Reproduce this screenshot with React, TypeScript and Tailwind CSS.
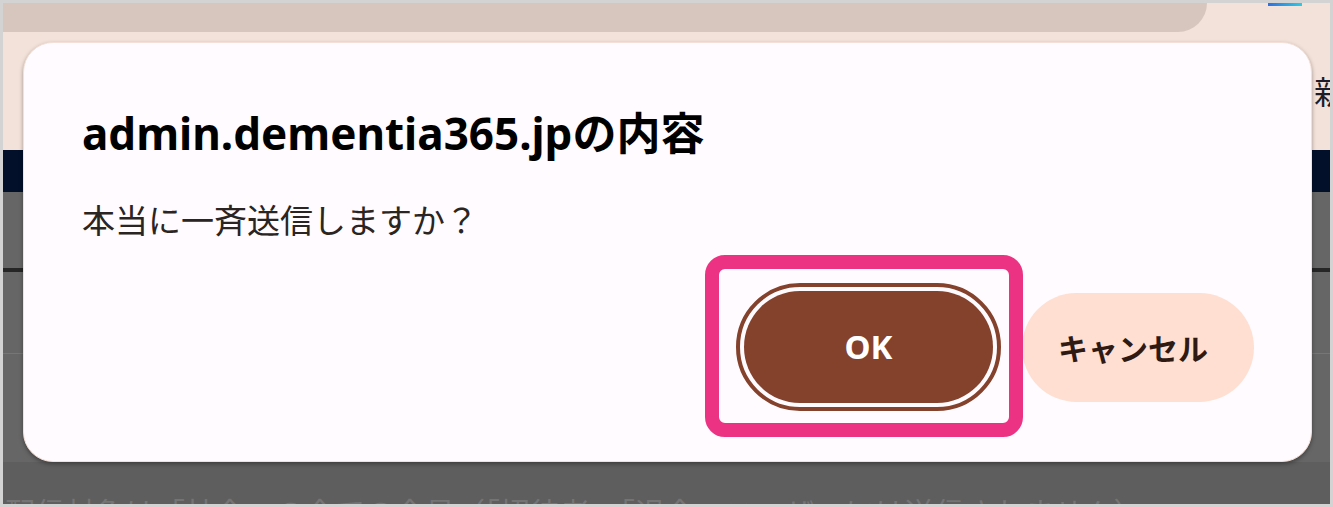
export default function App() {
  return (
    <div className="relative w-[1333px] h-[507px] overflow-hidden border-[3px] border-[#d3d3d3] bg-[#f3e2d9] font-['Noto_Sans','Noto_Sans_CJK_JP',sans-serif]">
      {/* page behind the dialog */}
      <div className="flex flex-col h-full">
        <div className="flex h-[29px] shrink-0">
          <div className="w-[1204px] h-full bg-[#d7c6be] rounded-br-[34px]" />
          <div className="ml-[61px] w-[34px] h-[3px] bg-gradient-to-r from-[#2f6fe0] to-[#2ccbe3]" />
        </div>
        <div className="flex h-[118px] shrink-0 justify-end items-start pt-[40px]">
          <span className="-mr-[16px] text-[32px] leading-[36px] text-[#1d1d2a] font-['Noto_Sans_CJK_JP',sans-serif]">新</span>
        </div>
        <div className="h-[42px] shrink-0 bg-[#02102a]" />
        <div className="flex flex-col flex-1 bg-[#666666]">
          <div className="h-[76px]" />
          <div className="h-[4px] bg-[#262626]" />
          <div className="h-[81px]" />
          <div className="h-px bg-[#767676]" />
          <div className="h-[108px]" />
          <div className="flex-1 bg-[#5e5e5e] pt-[31px] px-[2px] overflow-hidden">
            <p className="whitespace-nowrap text-[30px] leading-[36px] text-[#747474] font-['Noto_Sans_CJK_JP',sans-serif]">
              配信対象は「社会」の全ての会員（「招待者」「退会」ユーザーには送信されません）
            </p>
          </div>
        </div>
      </div>

      {/* confirm dialog */}
      <div className="absolute left-[20px] top-[39px] w-[1289px] h-[420px] flex flex-col rounded-[30px] border border-[#f4e0d8] bg-[#fffbfe] pl-[58px] pr-[57px] pt-[66px] shadow-[0_2px_4px_rgba(0,0,0,0.35)]">
        <h1 className="text-[44px] leading-[48px] font-bold text-black">admin.dementia365.jpの内容</h1>
        <p className="mt-[42px] text-[33px] leading-[40px] text-[#2a2422] font-['Noto_Sans_CJK_JP',sans-serif]">
          本当に一斉送信しますか？
        </p>
        <div className="mt-[44px] flex items-center justify-end gap-[21px]">
          <div className="relative">
            <div className="rounded-full border-4 border-[#84412c] p-1">
              <button className="flex w-[249px] h-[112px] items-center justify-center rounded-full bg-[#84412c] text-[33px] font-bold text-white">
                OK
              </button>
            </div>
            <div className="absolute -left-[31px] -top-[28px] -right-[22px] -bottom-[26px] rounded-[20px] border-[14px] border-[#ec3383]" />
          </div>
          <button className="flex w-[232px] h-[109px] items-center justify-center rounded-full bg-[#fedfd2] pr-[10px] text-[30px] font-bold text-[#2e1a12] font-['Noto_Sans_CJK_JP',sans-serif]">
            キャンセル
          </button>
        </div>
      </div>
    </div>
  )
}
